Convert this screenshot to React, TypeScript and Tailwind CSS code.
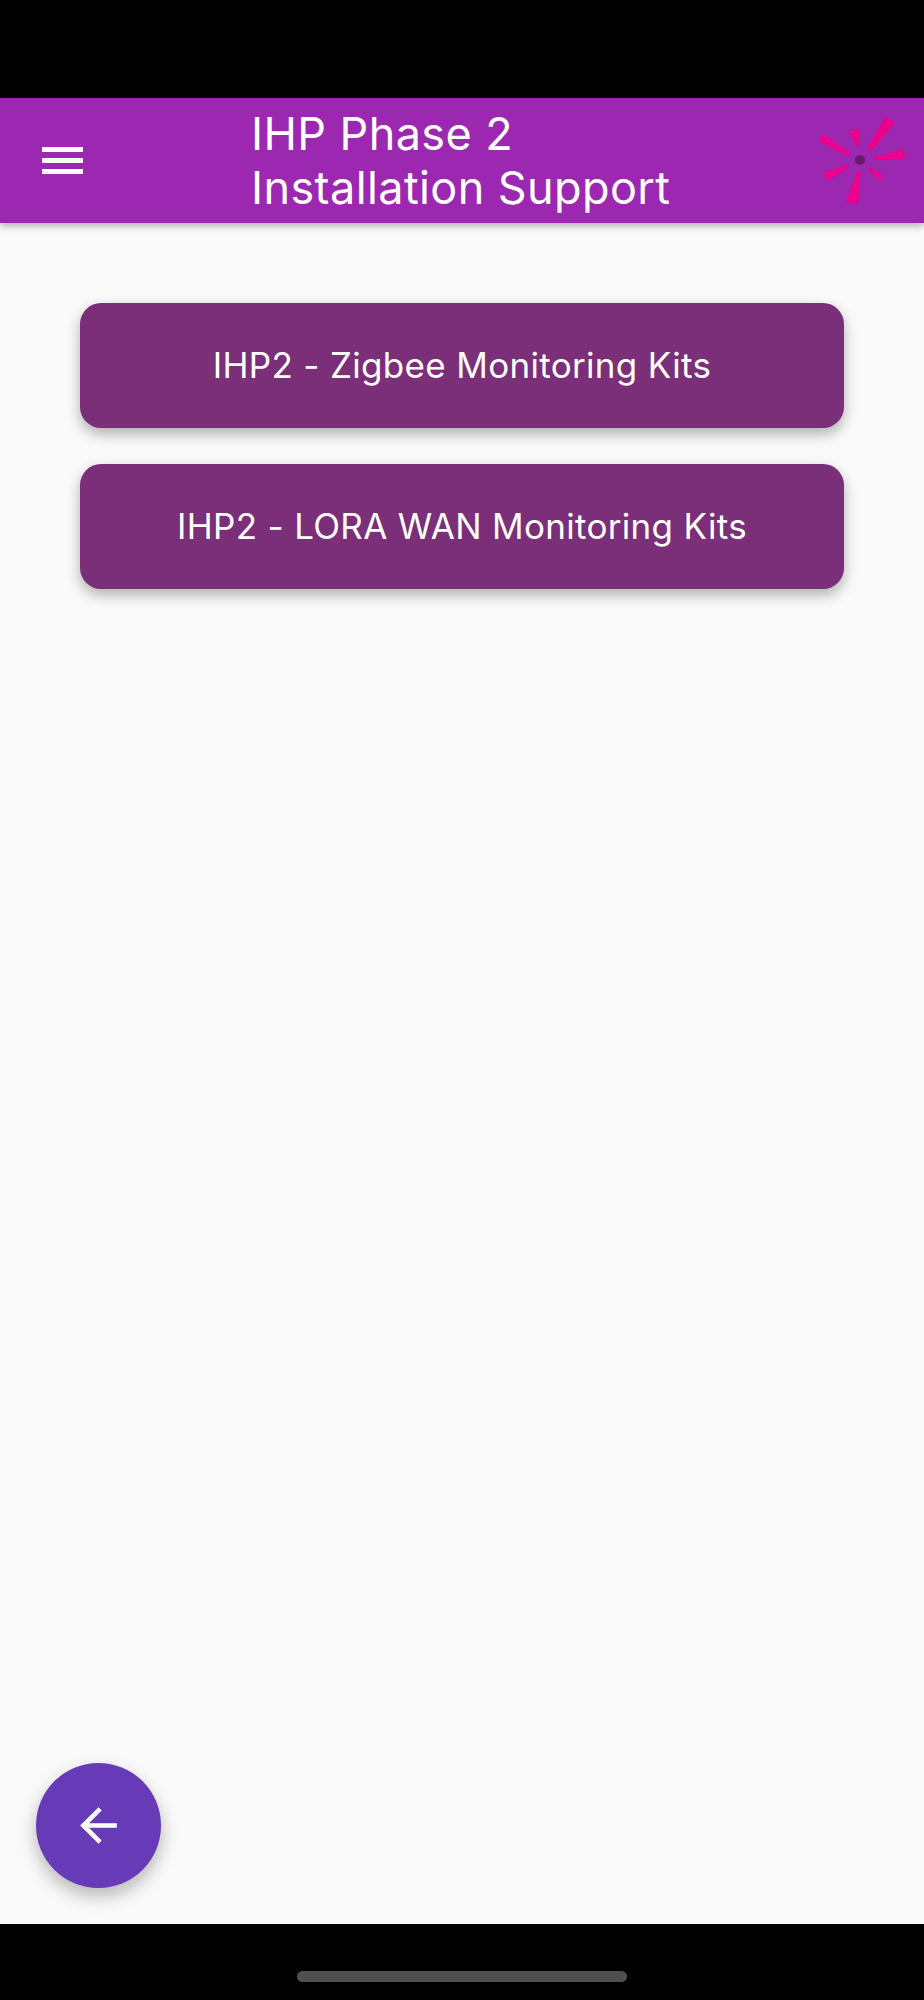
import React from 'react';

const rays = [
  '316,84 342,99 276,178 265,172',
  '370,180 372,205 285,208 284,203',
  '272,236 308,258 298,268 268,240',
  '232,248 240,250 232,340 201,335',
  '200,227 204,232 145,268 131,250',
  '132,135 208,190 203,196 117,152',
  '209,123 235,120 234,165 229,165',
];

const Logo = () => (
  <svg viewBox="0 0 432 375" className="w-[144px] h-[125px] shrink-0">
    <g transform="translate(0 -24)">
      {rays.map((points) => (
        <polygon key={points} points={points} fill="#ec008c" stroke="#ec008c" strokeWidth="4" strokeLinejoin="round" />
      ))}
      <circle cx="240" cy="210" r="15" fill="#6a1b6e" />
    </g>
  </svg>
);

const MenuIcon = () => (
  <svg viewBox="0 0 41 27" className="w-[41px] h-[27px]" fill="#ffffff">
    <rect x="0" y="0" width="41" height="5" />
    <rect x="0" y="11" width="41" height="5" />
    <rect x="0" y="22" width="41" height="5" />
  </svg>
);

const BackIcon = () => (
  <svg viewBox="0 0 24 24" className="w-[55px] h-[55px]" fill="#ffffff">
    <path d="M20 11H7.83l5.59-5.59L12 4l-8 8 8 8 1.41-1.41L7.83 13H20v-2z" />
  </svg>
);

const KitButton = ({ label }: { label: string }) => (
  <button className="w-full h-[125px] rounded-[21px] bg-[#7a2f78] text-white text-[35px] tracking-[0.32px] shadow-[0_6px_14px_rgba(0,0,0,0.3)]">
    {label}
  </button>
);

export default function App() {
  return (
    <div className="flex flex-col w-[924px] h-[2000px] bg-black font-['Inter',sans-serif]">
      <div className="h-[98px] shrink-0" />
      <header className="z-10 flex items-center h-[125px] shrink-0 bg-[#9c27b0] pl-[42px] shadow-[0_3px_7px_rgba(0,0,0,0.3)]">
        <MenuIcon />
        <h1 className="ml-[168px] flex-1 text-white text-[45px] leading-[54px] tracking-[0.4px] font-normal">
          IHP Phase 2
          <br />
          Installation Support
        </h1>
        <Logo />
      </header>
      <main className="flex flex-col justify-between flex-1 bg-[#fafafa]">
        <div className="flex flex-col gap-[36px] px-[80px] pt-[80px]">
          <KitButton label="IHP2 - Zigbee Monitoring Kits" />
          <KitButton label="IHP2 - LORA WAN Monitoring Kits" />
        </div>
        <div className="pl-[36px] pb-[36px]">
          <button className="flex items-center justify-center w-[125px] h-[125px] rounded-full bg-[#673ab7] shadow-[0_8px_18px_rgba(0,0,0,0.28)]">
            <BackIcon />
          </button>
        </div>
      </main>
      <footer className="flex justify-center h-[76px] shrink-0 pt-[47px]">
        <div className="w-[330px] h-[11px] rounded-full bg-[#4f4f4f]" />
      </footer>
    </div>
  );
}
